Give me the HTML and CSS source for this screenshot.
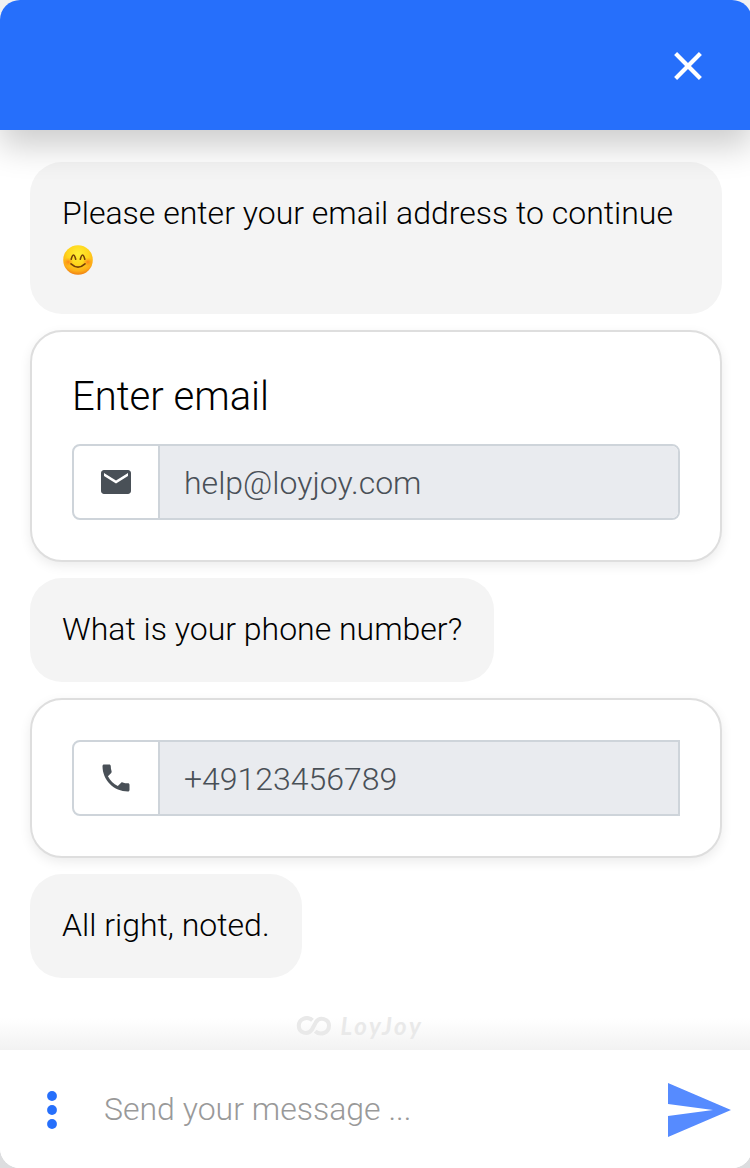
FILE: index.html
```html
<!DOCTYPE html>
<html lang="en">
<head>
<meta charset="utf-8">
<title>Chat</title>
<link rel="stylesheet" href="styles.css">
</head>
<body>
<div class="chat">
  <header class="chat-header">
    <button class="close" aria-label="Close">
      <svg width="28" height="28" viewBox="0 0 28 28"><path d="M1.600 1.600L26.400 26.400M26.400 1.600L1.600 26.400" stroke="#fff" stroke-width="4.200" fill="none"/></svg>
    </button>
  </header>
  <main class="messages">
    <div class="bubble bubble-wide">Please enter your email address to continue
      <svg class="emoji" role="img" aria-label="Smiling face" width="32" height="32" viewBox="0 0 32 32">
        <defs>
          <radialGradient id="face" cx=".5" cy=".3" r=".72"><stop offset="0" stop-color="#ffee35"/><stop offset=".5" stop-color="#ffd51c"/><stop offset=".8" stop-color="#fdae18"/><stop offset="1" stop-color="#ed7811"/></radialGradient>
          <radialGradient id="blush"><stop offset="0" stop-color="#fb6a16" stop-opacity=".75"/><stop offset="1" stop-color="#fb8a16" stop-opacity="0"/></radialGradient>
        </defs>
        <circle cx="16" cy="16" r="14.800" fill="url(#face)"/>
        <ellipse cx="6.3" cy="18" rx="5" ry="4.5" fill="url(#blush)"/>
        <ellipse cx="25.7" cy="18" rx="5" ry="4.5" fill="url(#blush)"/>
        <path d="M9.200 15.300q2.300-8.500 4.500 0M18.300 15.300q2.300-8.500 4.500 0M9 19.800q7 6.500 14 0" fill="none" stroke="#764108" stroke-width="1.600" stroke-linecap="round"/>
      </svg>
    </div>
    <section class="card card-email">
      <h2 class="card-title">Enter email</h2>
      <div class="field">
        <span class="field-icon"><svg width="36" height="36" viewBox="0 0 24 24"><path fill="#495057" d="M20 4H4c-1.100 0-2 .9-2 2v12c0 1.100.9 2 2 2h16c1.100 0 2-.9 2-2V6c0-1.100-.9-2-2-2zm0 4l-8 5-8-5V6l8 5 8-5v2z"/></svg></span>
        <span class="field-value">help@loyjoy.com</span>
      </div>
    </section>
    <div class="bubble">What is your phone number?</div>
    <section class="card">
      <div class="field field-square">
        <span class="field-icon"><svg width="36" height="36" viewBox="0 0 24 24"><path fill="#495057" d="M6.620 10.790c1.440 2.830 3.760 5.140 6.590 6.590l2.200-2.200c.27-.27.67-.36 1.020-.24 1.120.37 2.330.57 3.570.57.55 0 1 .45 1 1V20c0 .55-.45 1-1 1-9.390 0-17-7.610-17-17 0-.55.45-1 1-1h3.500c.55 0 1 .45 1 1 0 1.250.2 2.450.57 3.570.11.35.03.74-.25 1.020l-2.200 2.200z"/></svg></span>
        <span class="field-value">+49123456789</span>
      </div>
    </section>
    <div class="bubble">All right, noted.</div>
    <div class="brand">
      <svg width="36" height="20" viewBox="0 0 36 20"><path d="M16.500 4.300C11.500-.3 2.800 2.500 2.800 9.800c0 7.500 9 9.300 13 4L20 6c3.800-5.500 13-3.500 13 3.800 0 7.500-9 9.900-13.800 5.400" fill="none" stroke="#e9e9e9" stroke-width="4"/></svg>
      <span class="brand-name">LoyJoy</span>
    </div>
  </main>
  <footer class="composer">
    <svg class="menu" width="10" height="38" viewBox="0 0 10 38" fill="#266ffb"><circle cx="5" cy="5" r="4.900"/><circle cx="5" cy="19" r="4.900"/><circle cx="5" cy="33" r="4.900"/></svg>
    <span class="placeholder">Send your message ...</span>
    <svg class="send" width="63" height="54" viewBox="0 0 63 54"><path fill="#568bff" d="M0 0L63 27 0 54V33L45 27 0 21z"/></svg>
  </footer>
</div>
</body>
</html>
```
FILE: styles.css
```css
* { box-sizing: border-box; }
body {
  margin: 0;
  background: linear-gradient(#f1f1f2, #dcdddf);
  font-family: Roboto, "Liberation Sans", sans-serif;
  font-weight: 300;
  overflow: hidden;
}
.chat {
  display: flex;
  flex-direction: column;
  width: 752px;
  height: 1168px;
  border-radius: 20px;
  overflow: hidden;
  background: #fff;
}
.chat-header {
  flex: none;
  height: 130px;
  display: flex;
  align-items: center;
  justify-content: flex-end;
  padding: 2px 50px 0 0;
  background: #266ffb;
  box-shadow: 0 16px 32px rgba(0, 0, 0, .2);
  z-index: 1;
}
.close {
  display: flex;
  padding: 0;
  border: 0;
  background: none;
}
.messages {
  flex: 1;
  display: flex;
  flex-direction: column;
  align-items: flex-start;
  gap: 16px;
  padding: 32px 30px 0;
  background: linear-gradient(to top, #f2f2f2, #fff 32px);
}
.bubble {
  padding: 27px 32px 29px;
  border-radius: 32px;
  background: #f4f4f4;
  color: #000;
  font-size: 32px;
  line-height: 48px;
}
.bubble-wide {
  width: 692px;
  height: 152px;
}
.emoji {
  display: block;
  margin-top: 7px;
}
.card {
  width: 692px;
  padding: 40px;
  border: 2px solid #dedede;
  border-radius: 32px;
  background: #fff;
  box-shadow: 0 4px 12px rgba(0, 0, 0, .08);
}
.card-title {
  margin: 0 0 23px;
  padding-top: 1px;
  font-size: 40px;
  font-weight: 300;
  line-height: 48px;
  color: #000;
}
.field {
  display: flex;
  height: 76px;
  border: 2px solid #ced4da;
  border-radius: 8px;
  overflow: hidden;
}
.field-square { border-radius: 8px 0 0 8px; }
.field-icon {
  width: 86px;
  display: flex;
  align-items: center;
  justify-content: center;
  border-right: 2px solid #ced4da;
}
.field-value {
  flex: 1;
  padding-left: 24px;
  background: #e9ebef;
  color: #495057;
  font-size: 32px;
  line-height: 74px;
}
.brand {
  align-self: center;
  display: flex;
  align-items: center;
  gap: 9px;
  margin-top: 19px;
  margin-right: 33px;
  color: #e9e9e9;
}
.brand-name {
  font: italic 700 24px/26px Lato, sans-serif;
  letter-spacing: 2.7px;
}
.composer {
  flex: none;
  display: flex;
  align-items: center;
  height: 118px;
  padding: 2px 21px 0 47px;
  background: #fff;
}
.placeholder {
  flex: 1;
  margin: 0 0 2px 47px;
  color: #999;
  font-size: 32px;
  line-height: 48px;
}
```
